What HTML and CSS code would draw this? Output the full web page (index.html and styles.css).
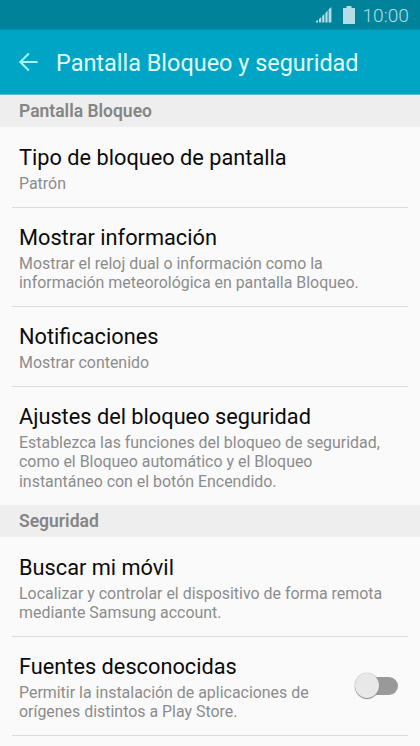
FILE: index.html
```html
<!DOCTYPE html>
<html lang="es">

<head>
  <meta charset="UTF-8">
  <meta name="viewport" content="width=device-width, initial-scale=1.0">
  <title>Pantalla Bloqueo y seguridad</title>
  <link rel="stylesheet" href="styles.css">
</head>

<body>
  <div class="status-bar">
    <svg class="signal" width="16" height="16" viewBox="0 0 16 16">
      <path d="M0 15.500v-1.500l2-1v2.500zM3 15.500v-3.500l2.200-2v5.500zM6.200 15.500v-6.500l2.200-2v8.500zM9.400 15.500v-9.500l2.200-2.500v12zM12.600 15.500v-13l2.800-2.500v15.500z" />
    </svg>
    <svg class="battery" width="12" height="18" viewBox="0 0 12 18">
      <path d="M3.500 0h5v2H12v16H0V2h3.500z" />
    </svg>
    <span class="clock">10:00</span>
  </div>

  <header>
    <svg class="back" width="20" height="20" viewBox="0 0 20 20">
      <path d="M19.500 10H2.500M10.800 1.500L2.300 10l8.500 8.500" />
    </svg>
    <h1>Pantalla Bloqueo y seguridad</h1>
  </header>

  <main>
    <h2>Pantalla Bloqueo</h2>
    <section>
      <div class="item">
        <h3>Tipo de bloqueo de pantalla</h3>
        <p>Patrón</p>
      </div>
      <div class="item">
        <h3>Mostrar información</h3>
        <p>Mostrar el reloj dual o información como la<br>información meteorológica en pantalla Bloqueo.</p>
      </div>
      <div class="item">
        <h3>Notificaciones</h3>
        <p>Mostrar contenido</p>
      </div>
      <div class="item">
        <h3>Ajustes del bloqueo seguridad</h3>
        <p>Establezca las funciones del bloqueo de seguridad,<br>como el Bloqueo automático y el Bloqueo<br>instantáneo con el botón Encendido.</p>
      </div>
    </section>

    <h2>Seguridad</h2>
    <section>
      <div class="item">
        <h3>Buscar mi móvil</h3>
        <p>Localizar y controlar el dispositivo de forma remota<br>mediante Samsung account.</p>
      </div>
      <div class="item with-switch">
        <div>
          <h3>Fuentes desconocidas</h3>
          <p>Permitir la instalación de aplicaciones de<br>orígenes distintos a Play Store.</p>
        </div>
        <div class="switch">
          <div class="knob"></div>
        </div>
      </div>
      <div class="item"></div>
    </section>
  </main>
</body>

</html>
```
FILE: styles.css
```css
* {
  margin: 0;
  padding: 0;
  box-sizing: border-box;
}

body {
  height: 746px;
  overflow: hidden;
  background-color: #fafafa;
  font-family: Roboto, sans-serif;
}

.status-bar {
  height: 29px;
  padding-right: 11px;
  display: flex;
  justify-content: flex-end;
  align-items: center;
  background-color: #00829b;
  color: #b5dde5;
}

.status-bar svg {
  fill: #b5dde5;
}

.battery {
  margin-left: 11px;
}

.clock {
  margin-left: 7px;
  padding-top: 2px;
  font-size: 19.2px;
  font-weight: 300;
  line-height: 29px;
}

header {
  height: 66px;
  padding: 1px 0 0 18px;
  display: flex;
  align-items: center;
  background-color: #00a5c5;
  border-top: 1px solid #0090ab;
  border-bottom: 1px solid #5bbdd0;
  color: #e4ffff;
}

.back {
  fill: none;
  stroke: #a0f8fc;
  stroke-width: 2;
  margin-top: -1px;
}

h1 {
  margin-left: 18px;
  font-size: 23.45px;
  font-weight: 400;
  white-space: nowrap;
}

h2 {
  height: 32px;
  padding-left: 19px;
  background-color: #eee;
  color: #858585;
  font-size: 17.5px;
  font-weight: 600;
  line-height: 32px;
}

.item {
  margin: 0 12px;
  padding: 17px 7px 13.7px;
}

.item + .item {
  padding-top: 16px;
  border-top: 1px solid #dcdcdc;
}

h3 {
  color: #0a0a0a;
  font-size: 21.75px;
  font-weight: 400;
  line-height: 28px;
  white-space: nowrap;
}

p {
  margin-top: 2px;
  color: #8c8c8c;
  font-size: 15.93px;
  line-height: 19.25px;
  white-space: nowrap;
}

.with-switch {
  display: flex;
  justify-content: space-between;
  align-items: center;
}

.switch {
  position: relative;
  width: 37px;
  height: 18px;
  margin: -1px 3px 0 0;
  border-radius: 9px;
  background-color: #999;
}

.knob {
  position: absolute;
  top: -4px;
  left: -6px;
  width: 24px;
  height: 25px;
  border-radius: 50%;
  background-color: #e8e8e8;
  box-shadow: 0 1px 1px #888, 0 0 1px #888;
}
```
